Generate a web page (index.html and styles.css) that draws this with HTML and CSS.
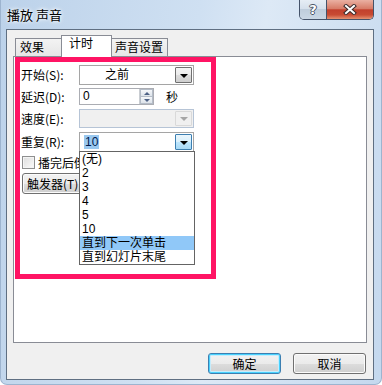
FILE: index.html
```html
<!DOCTYPE html>
<html lang="zh-CN">
<head>
    <meta charset="UTF-8">
    <meta name="viewport" content="width=device-width, initial-scale=1.0">
    <title>播放 声音</title>
    <link rel="stylesheet" href="styles.css">
</head>
<body>
    <div class="window">
        <div class="titlebar">
            <span class="title">播放 声音</span>
            <div class="capbtns">
                <span class="cap help">?</span>
                <span class="cap close">
                    <svg width="14" height="11" viewBox="0 0 14 11">
                        <path d="M3 2 L11 9 M11 2 L3 9" stroke="#3b2a2a" stroke-width="4" stroke-linecap="square"/>
                        <path d="M3 2 L11 9 M11 2 L3 9" stroke="#fff" stroke-width="2" stroke-linecap="square"/>
                    </svg>
                </span>
            </div>
        </div>

        <div class="client">
            <div class="tabs">
                <span class="tab first">效果</span>
                <span class="tab active">计时</span>
                <span class="tab last">声音设置</span>
            </div>

            <div class="panel">
                <div class="form">
                    <div class="row r1">
                        <label class="lbl">开始(S):</label>
                        <div class="combo">
                            <span class="val center">之前</span>
                            <span class="dd"><i class="arrow"></i></span>
                        </div>
                    </div>
                    <div class="row r2">
                        <label class="lbl">延迟(D):</label>
                        <div class="spin">
                            <span class="val">0</span>
                            <span class="spinbtns">
                                <span class="sb"><i class="up"></i></span>
                                <span class="sb"><i class="down"></i></span>
                            </span>
                        </div>
                        <span class="unit">秒</span>
                    </div>
                    <div class="row r3">
                        <label class="lbl">速度(E):</label>
                        <div class="combo disabled">
                            <span class="val"></span>
                            <span class="dd"><i class="arrow"></i></span>
                        </div>
                    </div>
                    <div class="row r4">
                        <label class="lbl">重复(R):</label>
                        <div class="combo">
                            <span class="val"><span class="sel">10</span></span>
                            <span class="dd hot"><i class="arrow"></i></span>
                        </div>
                    </div>
                    <!-- the open list hides the right part of these two rows -->
                    <div class="row r5 clip">
                        <span class="check"></span>
                        <span class="checktext">播完后倒</span>
                    </div>
                    <div class="row r6 clip">
                        <button class="btn trigger">触发器(T)</button>
                    </div>
                </div>

                <div class="mark"></div>

                <ul class="droplist">
                    <li>(无)</li>
                    <li>2</li>
                    <li>3</li>
                    <li>4</li>
                    <li>5</li>
                    <li>10</li>
                    <li class="on">直到下一次单击</li>
                    <li>直到幻灯片末尾</li>
                </ul>
            </div>

            <div class="actions">
                <button class="btn ok">确定</button>
                <button class="btn">取消</button>
            </div>
        </div>
    </div>
</body>
</html>
```

FILE: styles.css
```css
* { box-sizing: border-box; margin: 0; padding: 0; }
body { background: #fff; font-family: "Liberation Sans", "Noto Sans CJK SC", sans-serif; font-size: 12px; color: #000; }

.window {
    width: 382px; height: 385px;
    background: linear-gradient(100deg, #bcd2ea 0%, #cfe0f2 45%, #dde9f6 60%, #c4d8ee 100%);
    border: 1px solid #9db4cf; border-top: none;
    border-radius: 0 0 7px 7px;
    padding: 0 7px 5px 5px;
}

.titlebar { height: 29px; display: flex; justify-content: space-between; align-items: flex-start; }
.title { font-family: "Noto Sans CJK SC", sans-serif; font-size: 13px; line-height: 14px; margin: 8px 0 0 1px; text-shadow: 0 0 5px #fff, 0 0 3px #fff; }
.capbtns { display: flex; border: 1px solid #45536a; border-top: none; border-radius: 0 0 5px 5px; overflow: hidden; height: 20px; }
.cap { display: flex; align-items: center; justify-content: center; height: 19px; }
.help {
    width: 27px; border-right: 1px solid #45536a;
    background: linear-gradient(#e6edf5 0%, #d6e0ec 45%, #bfcddc 50%, #cad7e5 100%);
    font-family: "DejaVu Sans", sans-serif; font-weight: bold; font-size: 13px; color: #fff;
    text-shadow: 1px 0 #4a5566, -1px 0 #4a5566, 0 1px #4a5566, 0 -1px #4a5566;
}
.close { width: 46px; background: linear-gradient(#eab0a2 0%, #d77c68 45%, #c2402d 52%, #c84b33 78%, #e59272 100%); }

.client {
    height: 351px;
    border: 1px solid #5f6f82;
    background: #f0f0f0;
    padding: 5px 6px 0 6px;
}

.tabs { display: flex; align-items: flex-end; height: 21px; padding-left: 2px; position: relative; z-index: 2; }
.tab {
    height: 18px; border: 1px solid #898c95; border-bottom: none;
    background: linear-gradient(#f3f3f3, #e6e6e6);
    font-family: "Noto Sans CJK SC", sans-serif; line-height: 16px; padding-left: 4px;
}
.tab.first { width: 48px; }
.tab.active { width: 51px; height: 22px; margin: 0 -1px -1px -2px; background: #fff; padding-left: 7px; line-height: 14px; }
.tab.last { width: 57px; padding-left: 3px; }

.panel {
    position: relative;
    height: 287px;
    border: 1px solid #898c95;
    background: #fff;
}

.form { padding: 8px 0 0 7px; }
.row { display: flex; align-items: center; }
.r1 { height: 20px; }
.r2 { height: 17px; margin-top: 3px; }
.r3 { height: 19px; margin-top: 4px; }
.r4 { height: 20px; margin-top: 4px; }
.r5 { height: 13px; margin-top: 4px; }
.r6 { height: 21px; margin-top: 4px; }
.clip { width: 58px; overflow: hidden; white-space: nowrap; }

.lbl { width: 58px; font-family: "Noto Sans CJK SC", sans-serif; line-height: 14px; }

.combo { width: 115px; height: 100%; border: 1px solid #a5a5a5; display: flex; align-items: center; justify-content: space-between; padding: 1px; background: #fff; }
.combo .val { flex: 1; padding-left: 3px; line-height: 14px; font-family: "Liberation Sans", "Noto Sans CJK SC", sans-serif; }
.combo .val.center { padding-left: 24px; }
.sel { background: #99c8f0; color: #001a4d; padding: 0 1px; }
.dd {
    width: 17px; height: 100%; border: 1px solid #707070; border-radius: 1px;
    background: linear-gradient(#f4f4f4 0%, #ebebeb 50%, #dcdcdc 51%, #cfcfcf 100%);
    display: flex; align-items: center; justify-content: center;
}
.arrow { width: 0; height: 0; border-left: 4px solid transparent; border-right: 4px solid transparent; border-top: 4px solid #000; margin-top: 1px; }
.dd.hot { border-color: #3c7fb1; background: linear-gradient(#eaf6fd 0%, #d9f0fc 50%, #bee6fd 51%, #a7d9f5 100%); }
.combo.disabled { background: #f0f0f0; border-color: #b6c4d6; }
.combo.disabled .dd { border-color: #d9d9d9; background: #f0f0f0; }
.combo.disabled .arrow { border-top-color: #a6a6a6; }

.spin { width: 75px; height: 100%; border: 1px solid #abadb3; display: flex; justify-content: space-between; padding: 0 0 0 3px; }
.spin .val { line-height: 15px; }
.spinbtns { width: 14px; display: flex; flex-direction: column; border-left: 1px solid #c9cdd2; }
.sb { flex: 1; display: flex; align-items: center; justify-content: center; background: linear-gradient(#f5f7fa, #dde3ea); border: 1px solid #b4bcc7; }
.sb + .sb { border-top: none; }
.up { border-left: 3px solid transparent; border-right: 3px solid transparent; border-bottom: 3px solid #4d6185; }
.down { border-left: 3px solid transparent; border-right: 3px solid transparent; border-top: 3px solid #4d6185; }
.unit { margin-left: 12px; font-family: "Noto Sans CJK SC", sans-serif; line-height: 14px; }

.check { flex: none; width: 13px; height: 13px; margin-left: 1px; border: 1px solid #8e8f8f; background: linear-gradient(135deg, #dcdcdc, #fbfbfb); box-shadow: inset 0 0 0 1px #f4f4f4; }
.checktext { margin-left: 3px; font-family: "Noto Sans CJK SC", sans-serif; line-height: 14px; }

.btn {
    height: 21px; border: 1px solid #707070; border-radius: 3px;
    background: linear-gradient(#f2f2f2 0%, #ebebeb 50%, #dddddd 51%, #cfcfcf 100%);
    font-family: "Noto Sans CJK SC", sans-serif; font-size: 12px; line-height: 14px; color: #000;
    box-shadow: inset 0 0 0 1px #fbfbfb;
}
.trigger { flex: none; width: 92px; margin-left: 1px; text-align: left; padding-left: 4px; }

.mark {
    position: absolute; left: 1px; top: 0;
    width: 201px; height: 222px;
    border: 5px solid #ff1464;
}

.droplist {
    position: absolute; left: 65px; top: 94px;
    width: 116px; height: 114px;
    border: 1px solid #646464; background: #fff;
    list-style: none; z-index: 3;
}
.droplist li { height: 14px; line-height: 14px; padding-left: 2px; font-family: "Liberation Sans", "Noto Sans CJK SC", sans-serif; }
.droplist li.on { background: #90c8f8; }

.actions { display: flex; justify-content: flex-end; gap: 12px; padding: 10px 1px 0 0; }
.actions .btn { width: 73px; text-align: center; }
.btn.ok { border-color: #3c7fb1; box-shadow: inset 0 0 0 1px #48d1fd, inset 0 0 0 2px #c5ecfc; }
```
